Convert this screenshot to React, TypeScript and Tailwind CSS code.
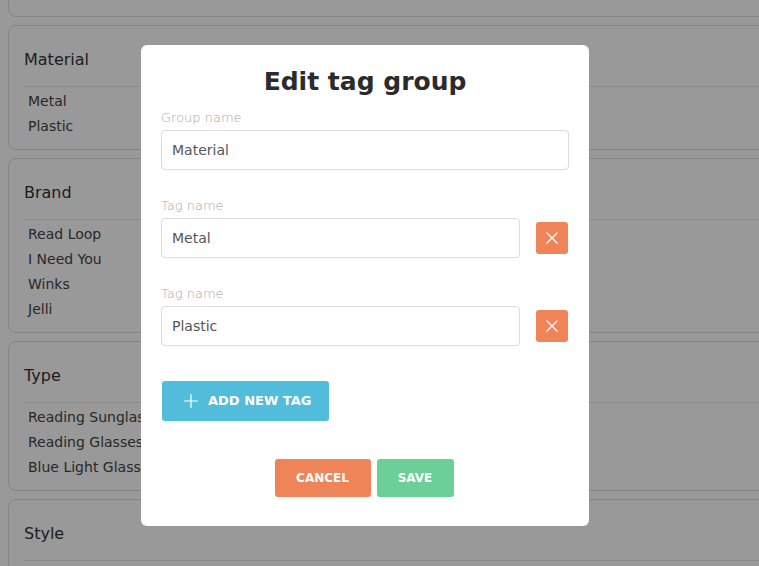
import { Plus, X } from "lucide-react";

const groups = [
    { name: "Material", tags: ["Metal", "Plastic"] },
    { name: "Brand", tags: ["Read Loop", "I Need You", "Winks", "Jelli"] },
    { name: "Type", tags: ["Reading Sunglasses", "Reading Glasses", "Blue Light Glasses"] },
    { name: "Style", tags: [] as string[] },
];

const font = "font-['DejaVu_Sans',sans-serif]";

function GroupCard({ name, tags }: { name: string; tags: string[] }) {
    return (
        <div className="w-[1000px] rounded-lg border border-[#dedede] bg-white">
            <div className="px-[15px] pt-[22px] pb-[14px] text-base leading-6 text-[#333]">{name}</div>
            <div className="mx-[15px] border-t border-[#e4e4e4]" />
            <div className="px-[19px] pt-[2px] pb-[10px]">
                {tags.map((t) => (
                    <div key={t} className="text-sm leading-[25px] text-[#444]">
                        {t}
                    </div>
                ))}
            </div>
        </div>
    );
}

function Field({ label, value, removable }: { label: string; value: string; removable?: boolean }) {
    return (
        <div>
            <div className="text-[13px] leading-[17px] font-extralight text-[#a8a8a8]">{label}</div>
            <div className="mt-1 flex items-center gap-4">
                <div className="flex h-10 flex-1 items-center rounded border border-[#dcdcdc] px-[10px] text-sm text-[#555]">
                    {value}
                </div>
                {removable && (
                    <button className="mr-px flex h-8 w-8 items-center justify-center rounded-[3px] bg-[#ef8458] text-white">
                        <X size={20} strokeWidth={1.5} />
                    </button>
                )}
            </div>
        </div>
    );
}

export default function App() {
    return (
        <div className={`relative h-[566px] w-full overflow-hidden bg-white ${font}`}>
            {/* page behind the dialog */}
            <div className="flex flex-col gap-2 pl-2">
                <div className="h-[17px] w-[1000px] rounded-b-lg border-x border-b border-[#dedede]" />
                {groups.map((g) => (
                    <GroupCard key={g.name} {...g} />
                ))}
            </div>

            {/* dialog overlay */}
            <div className="absolute inset-0 bg-black/40 pt-[45px] pl-[141px]">
                <div className="flex h-[481px] w-[448px] flex-col rounded-md bg-white px-5 pt-[19px]">
                    <h2 className="text-center text-[25px] leading-9 font-bold text-[#2b2b2b]">Edit tag group</h2>

                    <div className="mt-[9px]">
                        <Field label="Group name" value="Material" />
                    </div>
                    <div className="mt-[27px]">
                        <Field label="Tag name" value="Metal" removable />
                    </div>
                    <div className="mt-[27px]">
                        <Field label="Tag name" value="Plastic" removable />
                    </div>

                    <div className="mt-[35px] pl-px">
                        <button className="flex h-10 items-center gap-[6px] rounded-[3px] bg-[#52bcdb] px-[18px] text-[13px] font-bold text-white">
                            <Plus size={22} strokeWidth={1.3} />
                            ADD NEW TAG
                        </button>
                    </div>

                    <div className="mt-[38px] flex justify-center gap-[6px] pr-[2px]">
                        <button className="h-[38px] w-24 rounded-[3px] bg-[#ef8458] text-xs font-bold text-white">
                            CANCEL
                        </button>
                        <button className="h-[38px] w-[77px] rounded-[3px] bg-[#6bcf97] text-xs font-bold text-white">
                            SAVE
                        </button>
                    </div>
                </div>
            </div>
        </div>
    );
}
